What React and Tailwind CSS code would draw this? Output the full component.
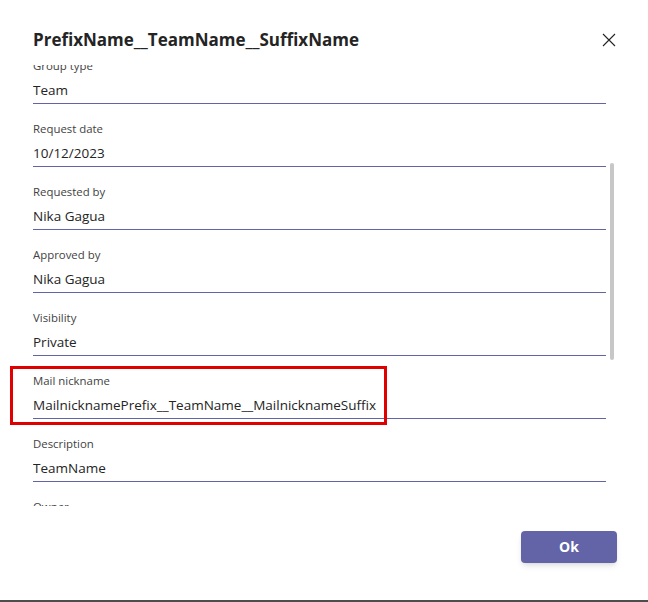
import React from 'react'

const fields = [
  { label: 'Group type', value: 'Team' },
  { label: 'Request date', value: '10/12/2023' },
  { label: 'Requested by', value: 'Nika Gagua' },
  { label: 'Approved by', value: 'Nika Gagua' },
  { label: 'Visibility', value: 'Private' },
  { label: 'Mail nickname', value: 'MailnicknamePrefix__TeamName__MailnicknameSuffix' },
  { label: 'Description', value: 'TeamName' },
  { label: 'Owner', value: 'Nika Gagua' },
]

function Field({ label, value }) {
  return (
    <div className="pt-[17px] pb-[3px] border-b border-[#6264a7]">
      <div className="text-[11.4px] leading-4 text-[#424242]">{label}</div>
      <div className="mt-[6px] text-[13.5px] leading-5 text-[#242424]">{value}</div>
    </div>
  )
}

export default function App() {
  return (
    <div className="relative h-[602px] w-[648px] bg-white border-b-2 border-[#4d4d4d] font-['Segoe_UI','Open_Sans',sans-serif] flex flex-col">
      <div className="flex items-center justify-between pl-[33px] pr-[32px] pt-[27px] h-[65px] pb-[13px]">
        <h1 className="text-[17px] font-bold text-[#242424] leading-6">PrefixName__TeamName__SuffixName</h1>
        <button className="text-[#242424]">
          <svg width="14" height="14" viewBox="0 0 14 14" fill="none" stroke="currentColor" strokeWidth="1.1">
            <path d="M1 1l12 12M13 1L1 13" />
          </svg>
        </button>
      </div>

      <div className="relative h-[441px] overflow-hidden ml-[33px] mr-[42px]">
        <div className="-mt-[24px]">
          {fields.map((f) => (
            <Field key={f.label} label={f.label} value={f.value} />
          ))}
        </div>
      </div>
      <div className="absolute left-[610px] top-[163px] h-[197px] w-[4px] rounded-full bg-[#c7c7c7]" />

      <div className="flex justify-end pr-[31px] pt-[25px]">
        <button className="h-8 w-[96px] rounded bg-[#6264a7] text-sm font-bold text-white shadow-md">Ok</button>
      </div>

      <div className="absolute left-[10px] top-[366px] h-[59px] w-[377px] border-[3px] border-[#e00000]" />
    </div>
  )
}
